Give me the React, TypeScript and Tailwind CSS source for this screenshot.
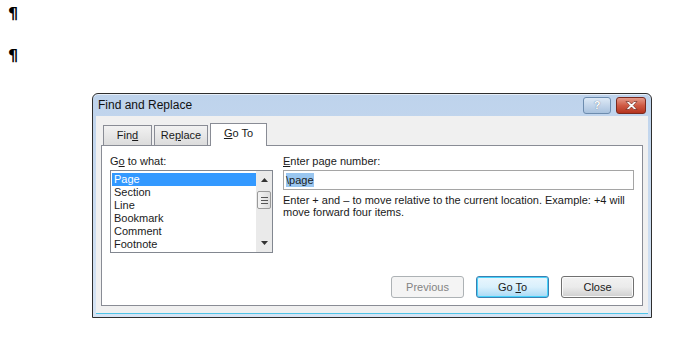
import React from "react"

const ui = "font-['Liberation_Sans',Tahoma,sans-serif] text-[11px] text-[#1a1a1a]"

function Tab({ label, u, w, active }: { label: string; u: number; w: string; active?: boolean }) {
    const text = (
        <>
            {label.slice(0, u)}
            <span className="underline">{label[u]}</span>
            {label.slice(u + 1)}
        </>
    )
    if (active) {
        return (
            <div className={`relative z-10 -mb-px flex h-[23px] items-center justify-center border border-b-0 border-[#898c95] bg-white pb-[3px] ${w}`}>
                {text}
            </div>
        )
    }
    return (
        <div className={`mt-[2px] flex h-[20px] items-center justify-center border border-b-0 border-[#898c95] bg-gradient-to-b from-[#f2f2f2] to-[#dcdcdc] ${w}`}>
            {text}
        </div>
    )
}

function Button({ children, kind }: { children: React.ReactNode; kind?: "default" | "disabled" }) {
    const base = "flex h-[22px] w-[73px] items-center justify-center rounded-[3px] border"
    if (kind === "disabled") {
        return <div className={`${base} border-[#adb2b5] bg-[#f4f4f4] text-[#838383]`}>{children}</div>
    }
    if (kind === "default") {
        return (
            <div className={`${base} border-[#3c7fb1] bg-gradient-to-b from-[#eaf6fd] via-[#d9f0fc] to-[#a7d9f5] shadow-[inset_0_0_0_1px_#48d3fb]`}>
                {children}
            </div>
        )
    }
    return (
        <div className={`${base} border-[#707070] bg-gradient-to-b from-[#f2f2f2] via-[#ebebeb] to-[#cfcfcf] shadow-[inset_0_0_0_1px_#fbfbfb]`}>
            {children}
        </div>
    )
}

export default function App() {
    const items = ["Page", "Section", "Line", "Bookmark", "Comment", "Footnote"]

    return (
        <div className={`h-[337px] w-[677px] overflow-hidden bg-white ${ui}`}>
            <div className="flex flex-col pl-[8px] pt-[5px] font-['DejaVu_Sans',sans-serif] text-[16px] font-bold leading-[18px] text-black">
                <span>¶</span>
                <span className="mt-[24px]">¶</span>
            </div>

            <div className="ml-[92px] mt-[28px] flex h-[225px] w-[560px] flex-col rounded-t-[6px] border border-[#2e2e2e] bg-gradient-to-b from-[#bed3ec] to-[#d6e4f4] shadow-[inset_0_1px_0_#e6eef8]">
                {/* title bar */}
                <div className="flex h-[22px] shrink-0 items-center justify-between pl-[5px] pr-[5px]">
                    <span className="font-['Liberation_Sans',sans-serif] text-[12px] text-[#111]">Find and Replace</span>
                    <div className="flex gap-[5px] pt-[1px]">
                        <div className="flex h-[17px] w-[28px] items-center justify-center rounded-[3px] border border-[#6d8cae] bg-gradient-to-b from-[#dde9f6] to-[#a9c2de] text-[11px] font-bold text-white [text-shadow:0_0_1px_#44597a]">
                            ?
                        </div>
                        <div className="flex h-[17px] w-[30px] items-center justify-center rounded-[3px] border border-[#7a2a1f] bg-gradient-to-b from-[#e49a8a] via-[#cf5a44] to-[#b4321d]">
                            <svg width="13" height="9" viewBox="0 0 13 9">
                                <path d="M1 0.5 L4 0.5 L6.5 3 L9 0.5 L12 0.5 L8.3 4.5 L12 8.5 L9 8.5 L6.5 6 L4 8.5 L1 8.5 L4.7 4.5 Z" fill="#fff" stroke="#5a1a10" strokeWidth="0.6" />
                            </svg>
                        </div>
                    </div>
                </div>

                {/* client area */}
                <div className="mx-[3px] mb-[3px] flex flex-1 flex-col border-b border-b-[#4fc4e8] bg-[#f0f0f0] px-[5px] pt-[7px]">
                    <div className="flex items-end gap-[2px] pl-[2px]">
                        <Tab label="Find" u={3} w="w-[49px]" />
                        <Tab label="Replace" u={2} w="w-[54px]" />
                        <Tab label="Go To" u={0} w="w-[57px]" active />
                    </div>

                    <div className="flex h-[161px] flex-col border border-[#898c95] bg-white px-[8px] pt-[8px]">
                        <div className="flex gap-[10px]">
                            <div className="flex w-[163px] flex-col">
                                <span className="h-[14px] leading-[14px]">
                                    G<span className="underline">o</span> to what:
                                </span>
                                <div className="mt-[2px] flex h-[83px] border border-[#828790] bg-white">
                                    <div className="flex flex-1 flex-col pl-[1px] pt-[2px]">
                                        {items.map((it, i) => (
                                            <div
                                                key={it}
                                                className={`h-[13px] pl-[2px] leading-[13px] ${i === 0 ? "bg-[#3399ff] text-white" : ""}`}
                                            >
                                                {it}
                                            </div>
                                        ))}
                                    </div>
                                    <div className="flex w-[16px] flex-col items-center bg-[#eaeaea] py-[1px]">
                                        <div className="flex h-[16px] items-center justify-center">
                                            <svg width="7" height="4" viewBox="0 0 7 4">
                                                <path d="M0 4 L3.5 0 L7 4 Z" fill="#333" />
                                            </svg>
                                        </div>
                                        <div className="mt-[3px] flex h-[18px] w-[14px] flex-col items-center justify-center gap-[2px] rounded-[2px] border border-[#9a9a9a] bg-gradient-to-r from-[#f4f4f4] to-[#dcdcdc]">
                                            <div className="h-px w-[7px] bg-[#555]" />
                                            <div className="h-px w-[7px] bg-[#555]" />
                                            <div className="h-px w-[7px] bg-[#555]" />
                                        </div>
                                        <div className="flex-1" />
                                        <div className="flex h-[16px] items-center justify-center">
                                            <svg width="7" height="4" viewBox="0 0 7 4">
                                                <path d="M0 0 L3.5 4 L7 0 Z" fill="#333" />
                                            </svg>
                                        </div>
                                    </div>
                                </div>
                            </div>

                            <div className="flex flex-1 flex-col">
                                <span className="h-[14px] leading-[14px]">
                                    <span className="underline">E</span>nter page number:
                                </span>
                                <div className="mt-[2px] flex h-[20px] w-[351px] items-center border border-[#a5a5a5] bg-white px-[2px]">
                                    <span className="bg-[#99c6f0] leading-[14px]">\page</span>
                                </div>
                                <p className="mt-[4px] w-[350px] leading-[12px]">
                                    Enter + and – to move relative to the current location. Example: +4 will move forward four items.
                                </p>
                            </div>
                        </div>

                        <div className="mt-auto mb-[7px] flex justify-end gap-[12px]">
                            <Button kind="disabled">Previous</Button>
                            <Button kind="default">
                                <span>
                                    Go <span className="underline">T</span>o
                                </span>
                            </Button>
                            <Button>Close</Button>
                        </div>
                    </div>
                    <div className="flex-1" />
                </div>
            </div>
        </div>
    )
}
